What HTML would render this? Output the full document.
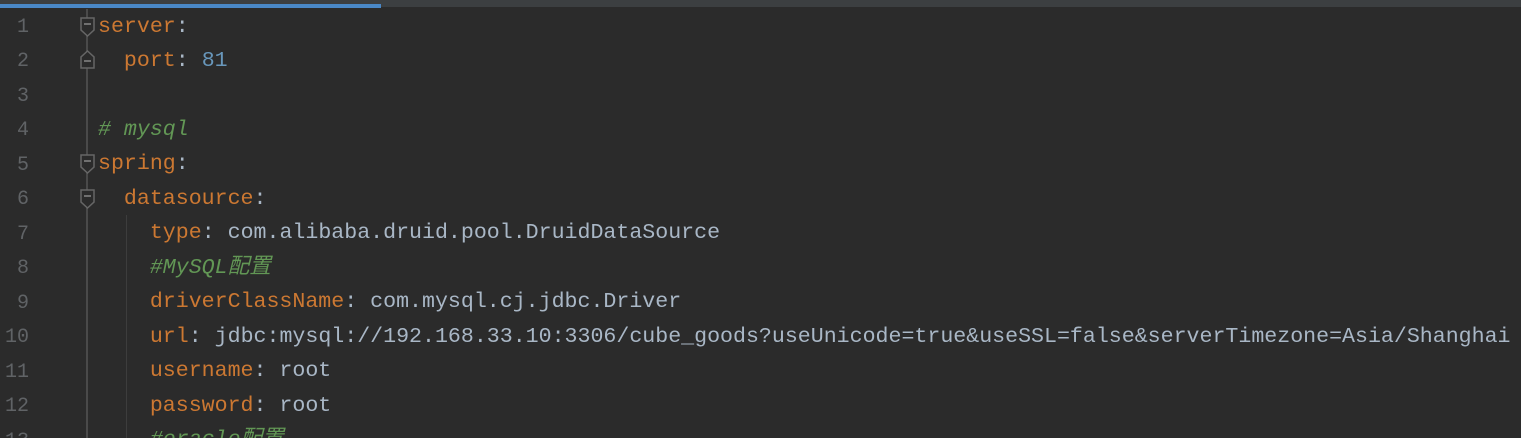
<!DOCTYPE html>
<html><head><meta charset="utf-8"><style>
html,body{margin:0;width:1521px;height:438px;overflow:hidden}
body{background:#2b2b2b;position:relative;font-family:"Liberation Mono","Noto Sans CJK SC",monospace;font-size:21.6px}
.top{position:absolute;left:0;top:0;width:1521px;height:7px;background:#3c3f41}
.blue{position:absolute;left:0;top:4px;width:381px;height:4px;background:#4a88c7}
.gl{position:absolute;left:86px;top:9px;width:2px;height:430px;background:#4a4a4a}
.ig{position:absolute;left:126px;width:1px;background:#3d3d3d}
.ln{position:absolute;left:0;width:29px;text-align:right;color:#606366;font-size:20px;line-height:26px;height:26px;margin-top:2px}
.c{position:absolute;left:98px;white-space:pre;color:#a9b7c6;line-height:26px;height:26px;margin-top:2px}
.k{color:#cc7832}.n{color:#6897bb}.m{color:#629755;font-style:italic}
svg{position:absolute;left:0;top:0}
</style></head><body>
<div class="top"></div><div class="blue"></div>
<div class="gl"></div>
<div class="ig" style="top:215px;height:226px"></div>
<svg width="120" height="438">
<g fill="#2b2b2b" stroke="#666" stroke-width="1.5">
<path d="M81 18 H94 V30 L87.5 36 L81 30 Z"/>
<path d="M81 68 H94 V57 L87.5 51 L81 57 Z"/>
<path d="M81 155 H94 V167 L87.5 173 L81 167 Z"/>
<path d="M81 190 H94 V202 L87.5 208 L81 202 Z"/>
</g>
<g stroke="#888" stroke-width="1.5">
<path d="M84 24 H91"/><path d="M84 61 H91"/><path d="M84 161 H91"/><path d="M84 196 H91"/>
</g>
</svg>
<div class="ln" style="top:13px">1</div>
<div class="ln" style="top:47px">2</div>
<div class="ln" style="top:82px">3</div>
<div class="ln" style="top:116px">4</div>
<div class="ln" style="top:151px">5</div>
<div class="ln" style="top:185px">6</div>
<div class="ln" style="top:220px">7</div>
<div class="ln" style="top:254px">8</div>
<div class="ln" style="top:289px">9</div>
<div class="ln" style="top:323px">10</div>
<div class="ln" style="top:358px">11</div>
<div class="ln" style="top:392px">12</div>
<div class="ln" style="top:427px">13</div>
<div class="c" style="top:12px"><span class="k">server</span>:</div>
<div class="c" style="top:46px">  <span class="k">port</span>: <span class="n">81</span></div>
<div class="c" style="top:115px"><span class="m"># mysql</span></div>
<div class="c" style="top:149px"><span class="k">spring</span>:</div>
<div class="c" style="top:184px">  <span class="k">datasource</span>:</div>
<div class="c" style="top:218px">    <span class="k">type</span>: com.alibaba.druid.pool.DruidDataSource</div>
<div class="c" style="top:253px">    <span class="m">#MySQL配置</span></div>
<div class="c" style="top:287px">    <span class="k">driverClassName</span>: com.mysql.cj.jdbc.Driver</div>
<div class="c" style="top:322px">    <span class="k">url</span>: jdbc:mysql://192.168.33.10:3306/cube_goods?useUnicode=true&amp;useSSL=false&amp;serverTimezone=Asia/Shanghai</div>
<div class="c" style="top:356px">    <span class="k">username</span>: root</div>
<div class="c" style="top:391px">    <span class="k">password</span>: root</div>
<div class="c" style="top:425px">    <span class="m">#oracle配置</span></div>
</body></html>
